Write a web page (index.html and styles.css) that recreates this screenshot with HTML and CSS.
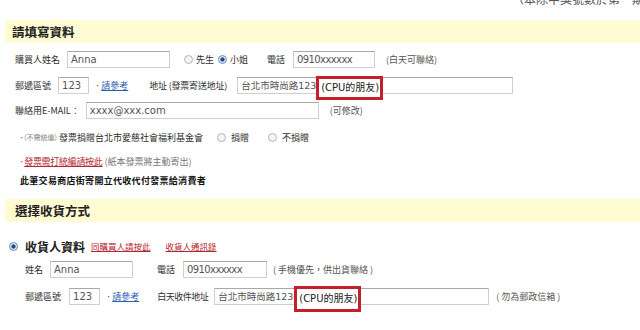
FILE: index.html
```html
<!DOCTYPE html>
<html lang="zh-Hant">
<head>
    <meta charset="UTF-8">
    <title>請填寫資料</title>
    <link rel="stylesheet" href="styles.css">
</head>
<body>
    <div class="topnote"><span>（本除中獎號數於第　期統發票</span></div>

    <div class="band"><h2>請填寫資料</h2></div>

    <div class="row r1">
        <span class="lbl">購買人姓名</span>
        <span class="field w-name"><span class="val">Anna</span></span>
        <span class="radio"></span><span class="lbl">先生</span>
        <span class="radio on"></span><span class="lbl">小姐</span>
        <span class="lbl tel">電話</span>
        <span class="field w-tel"><span class="val">0910xxxxxx</span></span>
        <span class="note">(白天可聯絡)</span>
    </div>

    <div class="row r2">
        <span class="lbl">郵遞區號</span>
        <span class="field w-zip"><span class="val">123</span></span>
        <span class="dot">·</span><a class="blue" href="#">請參考</a>
        <span class="lbl addr">地址 (發票寄送地址)</span>
        <span class="field w-addr"><span class="val cut">台北市時尚路123號</span><span class="mark">(CPU的朋友)</span></span>
    </div>

    <div class="row r3">
        <span class="lbl">聯絡用E-MAIL：</span>
        <span class="field w-mail"><span class="val">xxxx@xxx.com</span></span>
        <span class="note">(可修改)</span>
    </div>

    <div class="row r4">
        <span class="dot">·</span><span class="small">(不需統編)</span>
        <span class="lbl">發票捐贈台北市愛慈社會福利基金會</span>
        <span class="radio"></span><span class="lbl">捐贈</span>
        <span class="radio sp"></span><span class="lbl">不捐贈</span>
    </div>

    <div class="row r5">
        <span class="dot">·</span><a class="red" href="#">發票需打統編請按此</a>
        <span class="note">(紙本發票將主動寄出)</span>
    </div>

    <div class="row r6"><b>此筆交易商店街寄開立代收代付發票給消費者</b></div>

    <div class="band b2"><h2>選擇收貨方式</h2></div>

    <div class="row r7">
        <span class="radio on"></span>
        <span class="big">收貨人資料</span>
        <a class="red" href="#">同購買人請按此</a>
        <a class="red sp2" href="#">收貨人通訊錄</a>
    </div>

    <div class="row r8">
        <span class="lbl">姓名</span>
        <span class="field w-name2"><span class="val">Anna</span></span>
        <span class="lbl tel2">電話</span>
        <span class="field w-tel2"><span class="val">0910xxxxxx</span></span>
        <span class="note n8">( 手機優先，供出貨聯絡 )</span>
    </div>

    <div class="row r9">
        <span class="lbl">郵遞區號</span>
        <span class="field w-zip2"><span class="val">123</span></span>
        <span class="dot">·</span><a class="blue" href="#">請參考</a>
        <span class="lbl addr2">白天收件地址</span>
        <span class="field w-addr2"><span class="val cut">台北市時尚路123號</span><span class="mark">(CPU的朋友)</span></span>
        <span class="note n9">( 勿為郵政信箱 )</span>
    </div>
</body>
</html>
```

FILE: styles.css
```css
body {
    margin: 0;
    width: 640px;
    height: 330px;
    overflow: hidden;
    font-family: "Noto Sans CJK TC", "DejaVu Sans", sans-serif;
    font-size: 9px;
    color: #444;
    background: #fff;
}
.topnote {
    height: 8px;
    padding-left: 512px;
    overflow: hidden;
    white-space: nowrap;
}
.topnote span {
    display: block;
    margin-top: -8px;
    font-size: 12px;
    line-height: 14px;
    color: #555;
}
.band {
    margin: 12px 0 0 5px;
    height: 23px;
    background: #fffbd3;
    display: flex;
    align-items: center;
}
.band h2 {
    margin: 0 0 0 7px;
    font-size: 12.5px;
    font-weight: bold;
    color: #222;
}
.band.b2 {
    margin-top: 12px;
}
.band.b2 h2 {
    margin-left: 10px;
}
.row {
    display: flex;
    align-items: center;
    padding-left: 15px;
    white-space: nowrap;
}
.r1 { margin-top: 8px; height: 17px; }
.r2 { margin-top: 9px; height: 16px; }
.r3 { margin-top: 9px; height: 16px; }
.r4 { margin-top: 12px; height: 14px; padding-left: 20px; }
.r5 { margin-top: 10px; height: 14px; padding-left: 20px; }
.r6 { margin-top: 5px; height: 14px; padding-left: 20px; }
.r6 b { color: #111; letter-spacing: 0.3px; }
.r7 { margin-top: 13px; height: 22px; padding-left: 9px; }
.r8 { margin-top: 4px; height: 17px; padding-left: 25px; }
.r9 { margin-top: 10px; height: 17px; padding-left: 25px; }

.lbl { color: #2e2e2e; }
.note { color: #555; margin-left: 11px; }
.small { font-size: 7px; color: #888; margin-right: 2px; }
.r5 .note { margin-left: 2px; color: #777; }
.n8 { margin-left: 6px; }
.n9 { margin-left: 7px; }
.dot {
    font-family: "DejaVu Sans", sans-serif;
    margin: 0 2px 0 7px;
    color: #555;
    font-size: 10px;
}
.r4 .dot, .r5 .dot { margin: 0 1px 0 0; }

.field {
    position: relative;
    box-sizing: border-box;
    height: 17px;
    border: 1px solid #cfcfcf;
    border-top-color: #a8a8a8;
    font-family: "DejaVu Sans", "Noto Sans CJK TC", sans-serif;
    font-size: 10px;
    color: #555;
    padding: 0 3px;
    line-height: 15px;
    background: #fff;
}
.val { display: inline-block; }
.val.cut {
    width: 76px;
    overflow: hidden;
    white-space: nowrap;
    vertical-align: top;
    font-size: 9.5px;
}
.field .mark {
    position: absolute;
    left: 78px;
    top: -2px;
    width: 67px;
    height: 24px;
    box-sizing: border-box;
    border: 3px solid #c3202b;
    background: #fff;
    color: #222;
    font-size: 10px;
    line-height: 18px;
    padding-left: 2px;
}
.w-name { width: 103px; margin-left: 7px; }
.w-tel { width: 82px; margin-left: 8px; letter-spacing: -0.6px; }
.w-zip { width: 31px; margin-left: 7px; }
.w-addr { width: 276px; margin-left: 10px; }
.w-mail { width: 233px; margin-left: 6px; }
.w-name2 { width: 83px; margin-left: 7px; }
.w-tel2 { width: 84px; margin-left: 8px; letter-spacing: -0.6px; }
.w-zip2 { width: 31px; margin-left: 8px; }
.w-addr2 { width: 275px; margin-left: 6px; }
.w-addr2 .mark { left: 79px; top: -3px; height: 26px; line-height: 20px; }

.tel { margin-left: 19px; }
.addr { margin-left: 21px; letter-spacing: -0.2px; }
.tel2 { margin-left: 24px; }
.addr2 { margin-left: 18px; letter-spacing: -0.5px; }

.radio {
    display: inline-block;
    width: 9px;
    height: 9px;
    border-radius: 50%;
    border: 1px solid #b5b5b5;
    background: #f4f4f4;
    margin: 0 3px 0 14px;
    box-sizing: border-box;
}
.radio.on {
    border-color: #6a8fbf;
    background: radial-gradient(circle, #244a86 0 1.8px, #d6e5f5 2.4px);
    margin-left: 4px;
}
.r4 .radio { margin: 0 5px 0 14px; }
.r4 .radio.sp { margin-left: 19px; }
.r7 .radio.on { margin: 0 7px 0 0; }

a.blue {
    color: #2a5db0;
    text-decoration: underline;
}
a.red {
    color: #b3262e;
    text-decoration: underline;
}
.r5 a.red { letter-spacing: -0.3px; }
.big {
    font-size: 12px;
    font-weight: bold;
    color: #222;
    margin-right: 6px;
}
.r7 a.red { font-size: 8.5px; }
.r7 a.sp2 { margin-left: 15px; }
```
